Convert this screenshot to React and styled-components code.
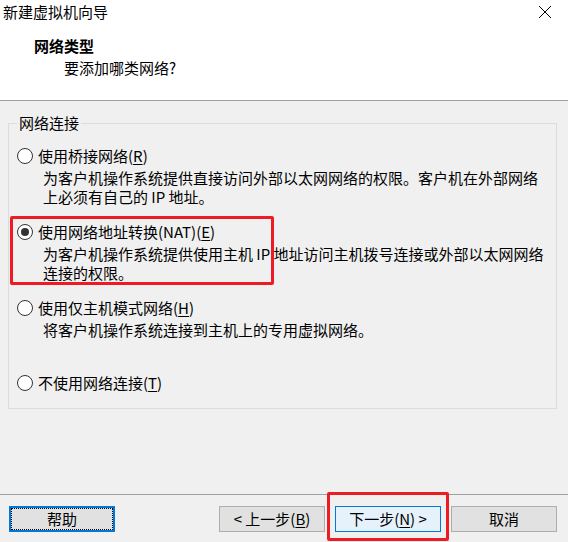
import styled, { createGlobalStyle } from 'styled-components';

const GlobalStyle = createGlobalStyle`
  html, body {
    margin: 0;
    padding: 0;
    background: #f0f0f0;
  }
  body {
    font-family: "Noto Sans CJK SC", "Noto Sans", "Liberation Sans", sans-serif;
    font-size: 15px;
    color: #000;
  }
`;

const options = [
  {
    label: '使用桥接网络',
    key: 'R',
    desc: ['为客户机操作系统提供直接访问外部以太网网络的权限。客户机在外部网络', '上必须有自己的 IP 地址。'],
  },
  {
    label: '使用网络地址转换(NAT)',
    key: 'E',
    desc: ['为客户机操作系统提供使用主机 IP 地址访问主机拨号连接或外部以太网网络', '连接的权限。'],
    checked: true,
    marked: true,
  },
  {
    label: '使用仅主机模式网络',
    key: 'H',
    desc: ['将客户机操作系统连接到主机上的专用虚拟网络。'],
  },
  {
    label: '不使用网络连接',
    key: 'T',
    desc: [],
  },
];

export default function App() {
  return (
    <>
      <GlobalStyle />
      <Dialog>
        <Header>
          <TitleBar>
            <Title>新建虚拟机向导</Title>
            <Close aria-label="关闭">
              <svg width="14" height="14" viewBox="0 0 14 14">
                <path d="M1 1 L13 13 M13 1 L1 13" stroke="#000" strokeWidth="1" />
              </svg>
            </Close>
          </TitleBar>
          <Heading>网络类型</Heading>
          <SubHeading>要添加哪类网络?</SubHeading>
        </Header>

        <Main>
          <Group>
            <Legend>网络连接</Legend>
            {options.map((o, i) => (
              <Option key={o.key} $marked={o.marked} $gap={i === 3 ? 34 : i === 0 ? 0 : 16}>
                <OptionLabel>
                  <Radio $checked={o.checked} />
                  <span>
                    {o.label}(<u>{o.key}</u>)
                  </span>
                </OptionLabel>
                {o.desc.length > 0 && (
                  <Desc>
                    {o.desc.map((line) => (
                      <div key={line}>{line}</div>
                    ))}
                  </Desc>
                )}
              </Option>
            ))}
          </Group>
        </Main>

        <Footer>
          <Button $focused>帮助</Button>
          <Spacer />
          <Button>
            &lt; 上一步(<u>B</u>)
          </Button>
          <Button $hover $marked>
            下一步(<u>N</u>) &gt;
          </Button>
          <Button>取消</Button>
        </Footer>
      </Dialog>
    </>
  );
}

const Dialog = styled.div`
  width: 568px;
  height: 542px;
  display: flex;
  flex-direction: column;
  background: #f0f0f0;
  overflow: hidden;
`;

const Header = styled.header`
  height: 100px;
  background: #fff;
  border-bottom: 1px solid #a0a0a0;
`;

const TitleBar = styled.div`
  height: 28px;
  display: flex;
  align-items: center;
  justify-content: space-between;
  padding-left: 3px;
  padding-bottom: 2px;
`;

const Title = styled.div`
  line-height: 20px;
  margin-top: -4px;
`;

const Close = styled.button`
  width: 46px;
  height: 28px;
  border: none;
  background: none;
  display: flex;
  align-items: center;
  justify-content: center;
  padding: 0;
  margin-top: -4px;
`;

const Heading = styled.div`
  font-weight: bold;
  line-height: 20px;
  padding-left: 34px;
  margin-top: 6px;
`;

const SubHeading = styled.div`
  line-height: 20px;
  padding-left: 64px;
  margin-top: 2px;
`;

const Main = styled.main`
  flex: 1;
  padding: 12px 11px 0 8px;
`;

const Group = styled.fieldset`
  margin: 0;
  border: 1px solid #dcdcdc;
  padding: 13px 8px 15px 8px;
`;

const Legend = styled.legend`
  line-height: 20px;
  padding: 0 2px;
  margin-left: 0;
`;

const Option = styled.div`
  position: relative;
  margin-top: ${(p) => p.$gap}px;

  ${(p) =>
    p.$marked &&
    `
    &::after {
      content: '';
      position: absolute;
      left: -7px;
      top: -6px;
      width: 258px;
      height: 63px;
      border: 3px solid #ed1c24;
      border-radius: 2px;
      pointer-events: none;
    }
  `}
`;

const OptionLabel = styled.label`
  display: flex;
  align-items: center;
  gap: 5px;
  line-height: 20px;

  u {
    text-underline-offset: 2px;
  }
`;

const Radio = styled.span`
  width: 14px;
  height: 14px;
  border: 1px solid #333;
  border-radius: 50%;
  background: #fff;
  display: flex;
  align-items: center;
  justify-content: center;
  flex: none;

  &::before {
    content: '';
    width: 8px;
    height: 8px;
    border-radius: 50%;
    background: ${(p) => (p.$checked ? '#333' : 'transparent')};
  }
`;

const Desc = styled.div`
  margin-top: 2px;
  padding-left: 26px;
  line-height: 19px;
  white-space: nowrap;
`;

const Footer = styled.footer`
  height: 48px;
  box-sizing: border-box;
  border-top: 1px solid #a0a0a0;
  padding: 11px 11px 10px 9px;
  display: flex;
  gap: 10px;
`;

const Spacer = styled.div`
  flex: 1;
`;

const Button = styled.button`
  position: relative;
  width: 106px;
  height: 26px;
  box-sizing: border-box;
  font: inherit;
  line-height: 20px;
  padding: 0;
  color: #000;
  background: ${(p) => (p.$hover ? '#e5f1fb' : '#e1e1e1')};
  border: ${(p) => (p.$focused ? '2px solid #0078d7' : p.$hover ? '1px solid #0078d7' : '1px solid #adadad')};
  outline: ${(p) => (p.$focused ? '1px dotted #000' : 'none')};
  outline-offset: -3px;

  u {
    text-underline-offset: 2px;
  }

  ${(p) =>
    p.$marked &&
    `
    &::after {
      content: '';
      position: absolute;
      left: -9px;
      right: -9px;
      top: -15px;
      bottom: -10px;
      border: 3px solid #ed1c24;
      border-radius: 2px;
      pointer-events: none;
    }
  `}
`;
